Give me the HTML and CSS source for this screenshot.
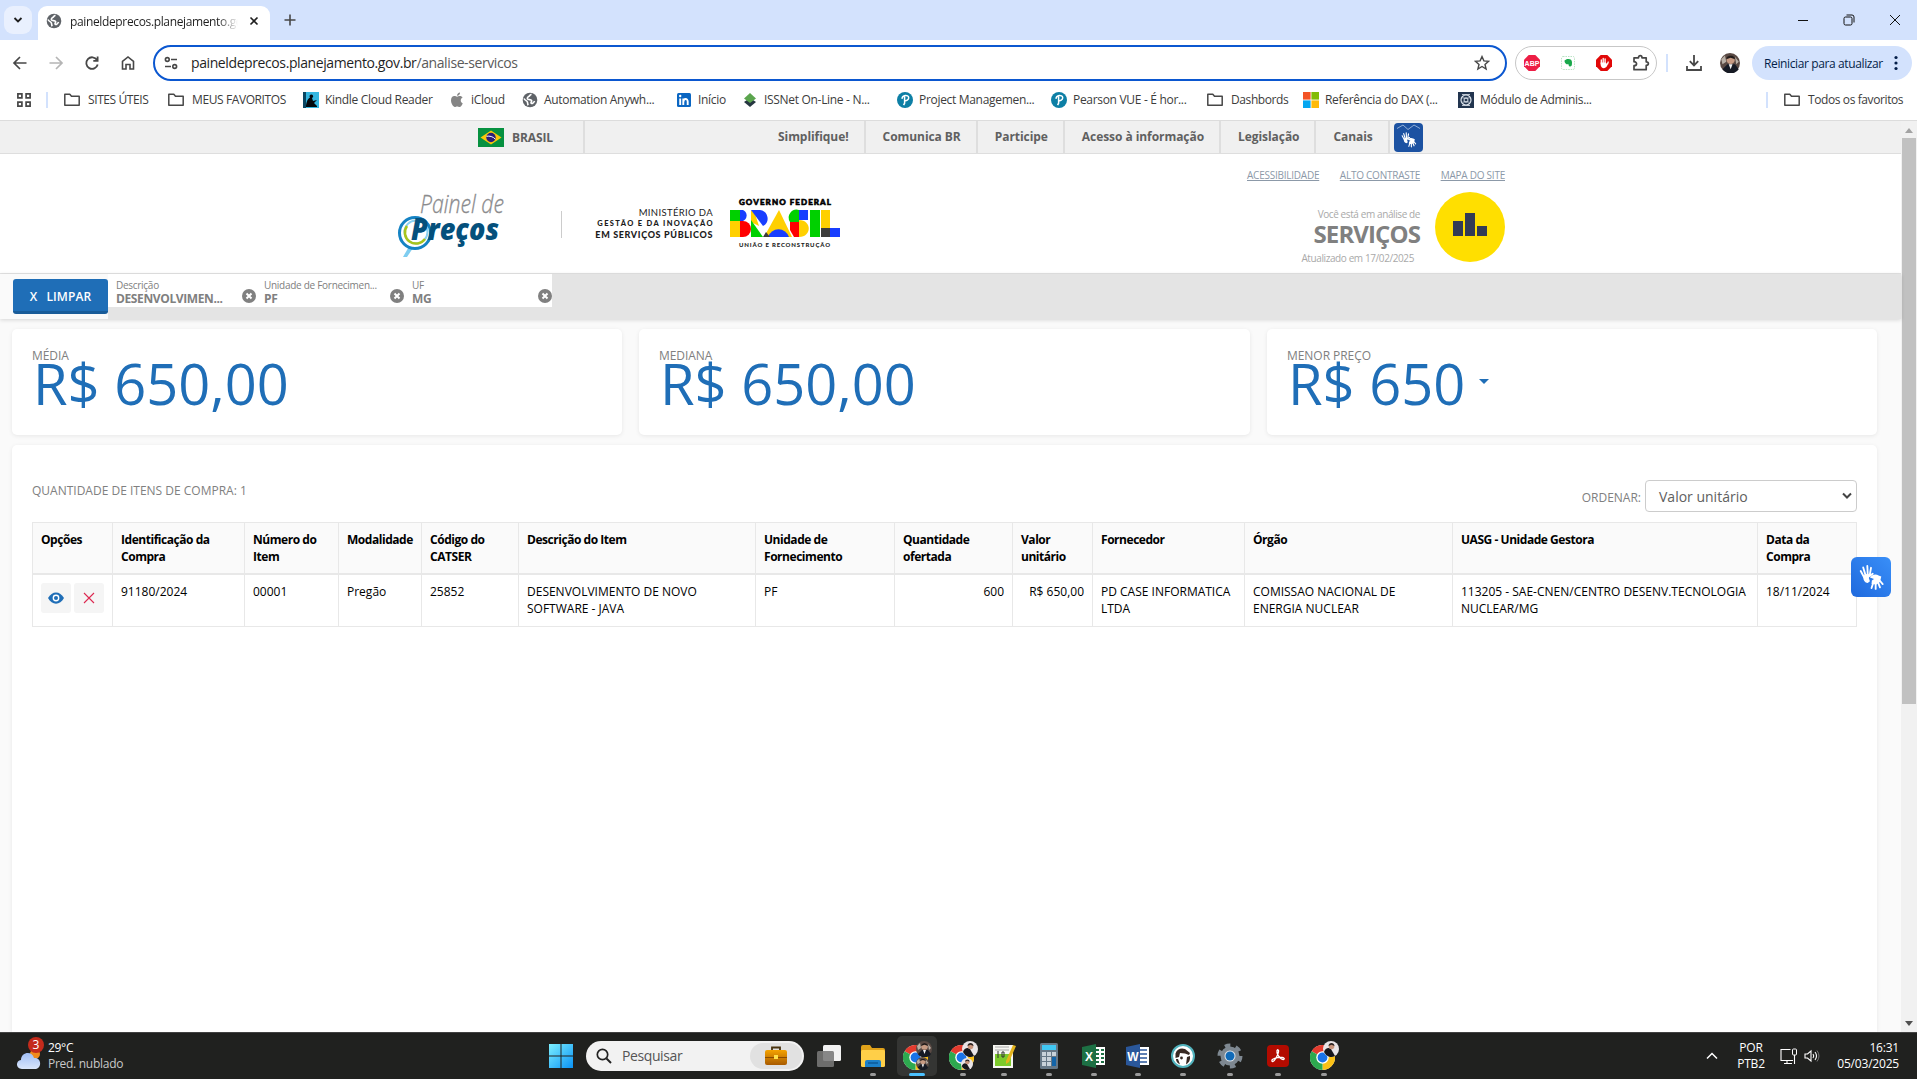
FILE: index.html
```html
<!DOCTYPE html>
<html lang="pt-BR">
<head>
<meta charset="utf-8">
<title>paineldeprecos.planejamento.gov.br</title>
<link rel="stylesheet" href="styles.css">
</head>
<body>
<svg class="defs" width="0" height="0">
  <defs>
    <linearGradient id="win" x1="0" y1="0" x2="1" y2="1"><stop offset="0" stop-color="#7df0ff"/><stop offset="1" stop-color="#0a92f5"/></linearGradient>
    <linearGradient id="case" x1="0" y1="0" x2="0" y2="1"><stop offset="0" stop-color="#f5a300"/><stop offset="1" stop-color="#a85a00"/></linearGradient>
    <linearGradient id="cloud" x1="0" y1="0" x2="0" y2="1"><stop offset="0" stop-color="#9fbdf5"/><stop offset="1" stop-color="#d9e6fb"/></linearGradient>
  </defs>
  <symbol id="folder" viewBox="0 0 16 16"><path d="M.8 13.2V2.2h5l1.7 2h7.7v9z" fill="none" stroke="#474747" stroke-width="1.5" stroke-linejoin="round"/></symbol>
  <symbol id="globe" viewBox="0 0 16 16"><circle cx="8" cy="8" r="7.3" fill="#5f6368"/><path d="M9.5 2.2c-2 .6-1.500 1.600-2.600 2.200-1 .6-2 1.400-1.300 2.600.8 1 3.200.2 4 1.400.6 1-.9 1.600-.6 2.700.3.900 2.200.6 3.600-2.100M2 6.500c.8 1.800 1.900 1.900 3 2.800 1 .8.300 2.500 1.200 3.900" fill="none" stroke="#fff" stroke-width="1.600"/></symbol>
  <symbol id="pearson" viewBox="0 0 16 16"><circle cx="8" cy="8" r="8" fill="#0d7fa5"/><path d="M5.200 6.800c-.8-3.600 6.500-4.600 6.500-1 0 2.300-2.500 3.200-4 2.700M7.600 4.600v6.600l-1 2" fill="none" stroke="#fff" stroke-width="1.500"/></symbol>
  <symbol id="hands" viewBox="0 0 24 24"><g fill="none" stroke="#fff" stroke-linecap="round" stroke-width="1.700"><path d="M5.500 12 2.500 6.500M7 10.500 4.800 3.200M9 10 8.600 1.800M10.800 10.500 12 3.500M10.800 11l2.800-2"/><path d="M14 17.500l-1.500 4.700M16.300 18v5M18.500 17l1.800 4.500M19.800 15l3 3.500"/></g><path d="M5 12c.5-2.500 4-4 6.200-1.500L10 13l1 3-2 1.500c-2.500 0-4.500-3-4-5.500z" fill="#fff"/><path d="M11 12.500c2-3 5.500-3.500 8-2l2.500 1-1.200 5-3.300 2.500-4.500-.5.300-3.300 2-1.300z" fill="#fff"/></symbol>
  <symbol id="chrome" viewBox="0 0 24 24"><circle cx="12" cy="12" r="12" fill="#fff"/><path d="M12 12 1.600 6A12 12 0 0 1 22.400 6z" fill="#e33b2e"/><path d="M12 12 22.400 6A12 12 0 0 1 12 24z" fill="#fbc116"/><path d="M12 12V24A12 12 0 0 1 1.600 6z" fill="#2da94f"/><path d="M12 6h10.400L17 15z" fill="#fbc116"/><circle cx="12" cy="12" r="6" fill="#fff"/><circle cx="12" cy="12" r="4.700" fill="#1a73e8"/></symbol>
  <symbol id="face" viewBox="0 0 16 16"><circle cx="8" cy="8" r="8" fill="#5a4a44"/><path d="M1 5 4 2l1 5-3 2zM12 3l3 4-2 2z" fill="#b9b0a6"/><path d="M2 13 6 9h6l3 4a8 8 0 0 1-13 0z" fill="#161a24"/><circle cx="8.500" cy="5.500" r="3.300" fill="#c79b83"/><path d="M5 5c0-4 7-4 7 0L8.500 3.800z" fill="#221c1b"/><path d="m7 9 1.500 4L10 9z" fill="#f3f3f3"/></symbol>
  <symbol id="face2" viewBox="0 0 16 16"><circle cx="8" cy="8" r="8" fill="#e9e4e6"/><path d="M1 11c1-4 5-5 7-3l4 7a8 8 0 0 1-11-4z" fill="#17161b"/><circle cx="8.500" cy="5.500" r="2.800" fill="#c9957c"/><path d="M5.500 5c0-4 6-4 6 0L8.500 3.800z" fill="#2c2220"/></symbol>
  <symbol id="xcircle" viewBox="0 0 14 14"><circle cx="7" cy="7" r="7" fill="#808080"/><path d="m4.500 4.500 5 5m0-5-5 5" stroke="#fff" stroke-width="2"/></symbol>
</svg>

<header class="tabstrip">
  <div class="tabsearch"><svg width="10" height="8" viewBox="0 0 10 8"><path d="m1.500 2 3.500 3.500L8.500 2" fill="none" stroke="#1f1f1f" stroke-width="1.800"/></svg></div>
  <div class="tab">
    <svg width="16" height="16"><use href="#globe"/></svg>
    <span class="tabtitle">paineldeprecos.planejamento.gov.br</span>
    <svg width="10" height="10" viewBox="0 0 10 10"><path d="m1.500 1.500 7 7m0-7-7 7" stroke="#1f1f1f" stroke-width="1.600"/></svg>
  </div>
  <svg class="newtab" width="12" height="12" viewBox="0 0 12 12"><path d="M6 .5v11M.5 6h11" stroke="#474747" stroke-width="1.600"/></svg>
  <div class="winbtns">
    <svg width="12" height="12" viewBox="0 0 12 12"><path d="M1 6.500h10" stroke="#111" stroke-width="1"/></svg>
    <svg width="12" height="12" viewBox="0 0 12 12"><rect x="1" y="3" width="8" height="8" rx="1.500" fill="none" stroke="#111"/><path d="M3.500 1H9a2 2 0 0 1 2 2v5.500" fill="none" stroke="#111"/></svg>
    <svg width="12" height="12" viewBox="0 0 12 12"><path d="m1 1 10 10M11 1 1 11" stroke="#111"/></svg>
  </div>
</header>

<div class="toolbar">
  <div class="nav">
    <svg width="16" height="16" viewBox="0 0 16 16"><path d="M14.500 8H2.500M8 2 2 8l6 6" fill="none" stroke="#474747" stroke-width="1.700"/></svg>
    <svg width="16" height="16" viewBox="0 0 16 16"><path d="M1.500 8h12M8 2l6 6-6 6" fill="none" stroke="#b5b5b5" stroke-width="1.700"/></svg>
    <svg width="16" height="16" viewBox="0 0 16 16"><path d="M13 5A5.800 5.800 0 1 0 13.700 9.500M13.600 1.500v4.300H9.300" fill="none" stroke="#474747" stroke-width="1.800"/></svg>
    <svg width="16" height="16" viewBox="0 0 16 16"><path d="M2.500 14V6.300L8 1.900l5.500 4.400V14H10V9.500H6V14z" fill="none" stroke="#474747" stroke-width="1.600"/></svg>
  </div>
  <div class="omnibox">
    <svg width="14" height="14" viewBox="0 0 14 14"><g fill="none" stroke="#474747" stroke-width="1.600"><circle cx="3.300" cy="3.500" r="1.900"/><path d="M7 3.500h6M1 10.500h6"/><circle cx="10.700" cy="10.500" r="1.900"/></g></svg>
    <span class="url">paineldeprecos.planejamento.gov.br<i>/analise-servicos</i></span>
    <svg class="star" width="16" height="16" viewBox="0 0 16 16"><path d="m8 1.600 1.900 4.300 4.700.4-3.600 3.100 1.100 4.600L8 11.500 3.900 14 5 9.400 1.400 6.300l4.700-.4z" fill="none" stroke="#474747" stroke-width="1.400"/></svg>
  </div>
  <div class="exts">
    <svg width="16" height="16" viewBox="0 0 16 16"><path d="M4.700 0h6.600L16 4.700v6.600L11.300 16H4.700L0 11.300V4.700z" fill="#ed1e45"/><text x="8" y="10.800" text-anchor="middle" class="abp">ABP</text></svg>
    <svg width="16" height="16" viewBox="0 0 16 16"><rect x="1.500" y="1.500" width="13" height="13" rx="1.500" fill="#fff" stroke="#b9e3c4" stroke-dasharray="1.500 1"/><path d="M4.500 5.500 7 4c3-.5 5 .5 5 3.500s-.5 4-2 4-1.500-1.500-1-2c-2 0-4.500-.5-4.500-4z" fill="#18a84a"/></svg>
    <svg width="16" height="16" viewBox="0 0 16 16"><path d="M4.700 0h6.600L16 4.700v6.600L11.300 16H4.700L0 11.300V4.700z" fill="#e10808"/><path d="M5.300 8.500V5M7.200 8V3.500M9.100 8V3.800M11.600 9l.6-2" stroke="#fff" stroke-width="1.300" stroke-linecap="round"/><path d="M4.600 7.500h5.200l1 1.300 1-.3c-.5 6-7 6-7.200 1z" fill="#fff"/></svg>
    <svg width="18" height="18" viewBox="0 0 18 18"><path d="M2 3.800h4.500C6.500.9 10 .9 10 3.800h4.200v4c2.900 0 2.900 3.600 0 3.600v4.300H2v-4c3.400 0 3.400-4 0-4z" fill="none" stroke="#474747" stroke-width="1.700" stroke-linejoin="round"/></svg>
  </div>
  <i class="vsep"></i>
  <svg class="dl" width="16" height="18" viewBox="0 0 16 18"><path d="M8 1v10M3.800 7.200 8 11.400l4.200-4.200M1 12v4h14v-4" fill="none" stroke="#474747" stroke-width="1.800"/></svg>
  <svg class="avatar" width="20" height="20"><use href="#face"/></svg>
  <div class="update"><span>Reiniciar para atualizar</span><svg width="4" height="16" viewBox="0 0 4 16"><g fill="#041e49"><circle cx="2" cy="2.500" r="1.600"/><circle cx="2" cy="8" r="1.600"/><circle cx="2" cy="13.500" r="1.600"/></g></svg></div>
</div>

<nav class="bookmarks">
  <svg width="16" height="16" viewBox="0 0 16 16"><g fill="none" stroke="#474747" stroke-width="1.700"><path d="M1.900 1.900h4v4h-4zM10.100 1.900h4v4h-4zM1.900 10.100h4v4h-4zM10.100 10.100h4v4h-4z"/></g></svg>
  <i class="vsep"></i>
  <a class="bm fold"><svg width="16" height="16"><use href="#folder"/></svg><span>SITES ÚTEIS</span></a>
  <a class="bm fold"><svg width="16" height="16"><use href="#folder"/></svg><span>MEUS FAVORITOS</span></a>
  <a class="bm"><svg width="16" height="16" viewBox="0 0 16 16"><rect width="16" height="16" fill="#35b6e0"/><path d="M0 0h3v16H0z" fill="#0a4662"/><path d="M7 5.500a1.800 1.800 0 1 1 2 .5l1 3 4-1-3 3 3 3v1H3c0-3 1-8 4-9.500z" fill="#04080c"/></svg><span>Kindle Cloud Reader</span></a>
  <a class="bm"><svg width="16" height="16" viewBox="0 0 16 16"><path d="M10.800 4c-1.200 0-1.900.7-2.700.7S6.500 4 5.300 4C3.600 4 2 5.500 2 8.300 2 11.500 4.200 15 5.800 15c1 0 1.300-.6 2.400-.6s1.400.6 2.300.6c1.400 0 2.800-2.400 3.200-3.800-2.700-1.200-2.400-4.600-.1-5.700C12.900 4.500 12 4 10.800 4zM8 3.800C8 2 9.500.6 11 .5 11.200 2.300 9.700 3.900 8 3.800z" fill="#858585"/></svg><span>iCloud</span></a>
  <a class="bm"><svg width="16" height="16"><use href="#globe"/></svg><span>Automation Anywh...</span></a>
  <a class="bm"><svg width="16" height="16" viewBox="0 0 16 16"><rect x="1" y="1" width="14" height="14" rx="1.500" fill="#0a66c2"/><path d="M4.200 6.500V13M7.300 13V6.500M7.400 10c0-4 4.300-4 4.300-.5V13" stroke="#fff" stroke-width="1.900" fill="none"/><circle cx="4.200" cy="4" r="1.200" fill="#fff"/></svg><span>Início</span></a>
  <a class="bm"><svg width="16" height="16" viewBox="0 0 16 16"><path d="m2 10 6-4 6 4-6 5z" fill="#263640"/><path d="m2 6.500 6-5.500 6 5.500-6 4.500z" fill="#5ba54e"/></svg><span>ISSNet On-Line - N...</span></a>
  <a class="bm"><svg width="16" height="16"><use href="#pearson"/></svg><span>Project Managemen...</span></a>
  <a class="bm"><svg width="16" height="16"><use href="#pearson"/></svg><span>Pearson VUE - É hor...</span></a>
  <a class="bm fold"><svg width="16" height="16"><use href="#folder"/></svg><span>Dashbords</span></a>
  <a class="bm"><svg width="16" height="16" viewBox="0 0 16 16"><path d="M0 0h7.600v7.600H0z" fill="#f35325"/><path d="M8.400 0H16v7.600H8.400z" fill="#81bc06"/><path d="M0 8.400h7.600V16H0z" fill="#05a6f0"/><path d="M8.400 8.400H16V16H8.400z" fill="#ffba08"/></svg><span>Referência do DAX (...</span></a>
  <a class="bm"><svg width="16" height="16" viewBox="0 0 16 16"><path d="M0 0h16v16H0z" fill="#22354f"/><circle cx="8" cy="8" r="5" fill="none" stroke="#dfe6ee" stroke-width="1.200"/><circle cx="8" cy="8" r="2" fill="none" stroke="#dfe6ee"/><path d="M4 2.500h8M4 13.500h8M4.500 6h7M4.500 10h7" stroke="#dfe6ee" stroke-width=".8"/></svg><span>Módulo de Adminis...</span></a>
  <i class="vsep"></i>
  <a class="bm fold"><svg width="16" height="16"><use href="#folder"/></svg><span>Todos os favoritos</span></a>
</nav>

<div class="viewport">
  <main class="page">
    <div class="govbar">
      <div class="brasil"><svg width="26" height="19" viewBox="0 0 26 19"><path d="M0 0h26v19H0z" fill="#069140"/><path d="m2.500 9.500 10.500-7 10.500 7-10.500 7z" fill="#f9c70a"/><circle cx="13" cy="9.500" r="4.700" fill="#2a1d79"/><path d="M8.500 8.300c3-.6 6.500.2 8.800 2.800" stroke="#fff" fill="none"/></svg><span>BRASIL</span></div>
      <a>Simplifique!</a><a>Comunica BR</a><a>Participe</a><a>Acesso à informação</a><a>Legislação</a><a>Canais</a>
      <svg class="libras" width="29" height="29" viewBox="0 0 29 29"><rect width="29" height="29" rx="4" fill="#1c52a2"/><path d="M3 5.500 9 2l5 4.500L20 2l6 3.500" fill="none" stroke="#9cb8de" stroke-width=".9"/><use href="#hands" x="6.500" y="8" width="16" height="17"/></svg>
    </div>

    <div class="sitehead">
      <svg class="painel" width="106" height="66" viewBox="0 0 106 66">
        <path d="m5 66 8-14 4 2-8 12z" fill="#7fcdf0"/>
        <circle cx="17" cy="42" r="15.500" fill="#fff" stroke="#1583c4" stroke-width="3"/>
        <circle cx="18" cy="41" r="11.500" fill="none" stroke="#8ad1f1" stroke-width="2"/>
        <path d="M9 35a11 11 0 0 0 18 13" fill="none" stroke="#a8c41c" stroke-width="2.500"/>
        <text x="22" y="21.500" class="lg1" textLength="84" lengthAdjust="spacingAndGlyphs">Painel de</text>
        <text x="13" y="48.500" class="lg2" textLength="88" lengthAdjust="spacingAndGlyphs">Preços</text>
      </svg>
      <i class="hdiv"></i>
      <div class="ministry"><span class="m1">MINISTÉRIO DA</span><span class="m2">GESTÃO E DA INOVAÇÃO</span><span class="m3">EM SERVIÇOS PÚBLICOS</span></div>
      <svg class="govfed" width="110" height="56" viewBox="0 0 110 56">
        <text x="9" y="10" class="gf1" textLength="92">GOVERNO FEDERAL</text>
        <g transform="translate(0 15)">
          <path d="M0 0h10v11H0z" fill="#00d000"/><path d="M10 0h3a6 6 0 0 1 0 11h-3z" fill="#183eff"/><path d="M0 11h10v16H0z" fill="#ffd000"/><path d="M10 11h3a8 8 0 0 1 0 16h-3z" fill="#f00"/>
          <path d="M21 0v12l8 4L25 4z" fill="#ffd000"/><path d="M21 0h9a8.500 8.500 0 0 1 3 16z" fill="#183eff"/><path d="M21 10v17h12z" fill="#00d000"/>
          <path d="m49 0 13 27H34z" fill="#ffd000"/><path d="M38 27a11 11 0 0 1 21 0z" fill="#183eff"/><path d="m33 27 3-5 4 5z" fill="#3c3c3b"/>
          <path d="M69 0v12h-9a8 8 0 0 1 9-12z" fill="#00d000"/><path d="M69 0h9v10h-9z" fill="#183eff"/><path d="M60 12h9v15h-5l-4-7z" fill="#f00"/><path d="M69 10c13 0 13 17 0 17z" fill="#ffd000"/>
          <path d="M80 0h10v27H80z" fill="#00d000"/><path d="M91 0h9v18h-9z" fill="#ffd000"/><path d="M91 18h9v9h-9z" fill="#3c3c3b"/><path d="M100 18h10v9h-10z" fill="#183eff"/>
        </g>
        <text x="9" y="52" class="gf2" textLength="91">UNIÃO E RECONSTRUÇÃO</text>
      </svg>
      <div class="context">
        <div class="links"><a>ACESSIBILIDADE</a><a>ALTO CONTRASTE</a><a>MAPA DO SITE</a></div>
        <div class="ctxrow">
          <div class="ctxtext"><small>Você está em análise de</small><strong>SERVIÇOS</strong><small class="upd">Atualizado em 17/02/2025</small></div>
          <svg width="70" height="70" viewBox="0 0 70 70"><circle cx="35" cy="35" r="35" fill="#ffdf00"/><path d="M18 29h10v15H18zM30 21h10v23H30zM42 34h10v10H42z" fill="#323b55"/></svg>
        </div>
      </div>
    </div>

    <div class="filterbar">
      <div class="clearwrap"><button class="clear"><b>X</b>LIMPAR</button></div>
      <div class="chip"><div><small>Descrição</small><b>DESENVOLVIMEN...</b></div><svg width="14" height="14"><use href="#xcircle"/></svg></div>
      <div class="chip"><div><small>Unidade de Fornecimen...</small><b>PF</b></div><svg width="14" height="14"><use href="#xcircle"/></svg></div>
      <div class="chip"><div><small>UF</small><b>MG</b></div><svg width="14" height="14"><use href="#xcircle"/></svg></div>
    </div>

    <div class="cards">
      <section class="card"><h3>MÉDIA</h3><p>R$ 650,00</p></section>
      <section class="card"><h3>MEDIANA</h3><p>R$ 650,00</p></section>
      <section class="card"><h3>MENOR PREÇO</h3><p>R$ 650<i class="caret"></i></p></section>
    </div>

    <section class="panel">
      <div class="panelhead"><span class="qty">QUANTIDADE DE ITENS DE COMPRA: 1</span><label>ORDENAR:</label><div class="select"><span>Valor unitário</span><svg width="10" height="8" viewBox="0 0 10 8"><path d="m1 1.500 4 4 4-4" fill="none" stroke="#444" stroke-width="2"/></svg></div></div>
      <table>
        <colgroup><col class="c1"><col class="c2"><col class="c3"><col class="c4"><col class="c5"><col class="c6"><col class="c7"><col class="c8"><col class="c9"><col class="c10"><col class="c11"><col class="c12"><col class="c13"></colgroup>
        <thead><tr><th>Opções</th><th>Identificação da<br>Compra</th><th>Número do<br>Item</th><th>Modalidade</th><th>Código do<br>CATSER</th><th>Descrição do Item</th><th>Unidade de<br>Fornecimento</th><th>Quantidade<br>ofertada</th><th>Valor<br>unitário</th><th>Fornecedor</th><th>Órgão</th><th>UASG - Unidade Gestora</th><th>Data da<br>Compra</th></tr></thead>
        <tbody><tr>
          <td class="opts"><div><span><svg width="16" height="12" viewBox="0 0 16 12"><path d="M0 6c4-7.500 12-7.500 16 0-4 7.500-12 7.500-16 0z" fill="#1f6eb7"/><circle cx="8" cy="6" r="3.400" fill="#fff"/><circle cx="8" cy="6" r="2" fill="#1f6eb7"/></svg></span><span><svg width="12" height="12" viewBox="0 0 12 12"><path d="m1 1 10 10M11 1 1 11" stroke="#dc2850" stroke-width="1.100"/></svg></span></div></td>
          <td>91180/2024</td><td>00001</td><td>Pregão</td><td>25852</td><td>DESENVOLVIMENTO DE NOVO<br>SOFTWARE - JAVA</td><td>PF</td><td class="num">600</td><td class="num">R$ 650,00</td><td>PD CASE INFORMATICA<br>LTDA</td><td>COMISSAO NACIONAL DE<br>ENERGIA NUCLEAR</td><td>113205 - SAE-CNEN/CENTRO DESENV.TECNOLOGIA<br>NUCLEAR/MG</td><td>18/11/2024</td></tr></tbody>
      </table>
    </section>
    <div class="vlibras"><svg width="26" height="26"><use href="#hands"/></svg></div>
  </main>
  <div class="scrollbar"><svg width="8" height="5" viewBox="0 0 8 5"><path d="M0 5h8L4 0z" fill="#a3a3a3"/></svg><i class="thumb"></i><svg width="8" height="5" viewBox="0 0 8 5"><path d="M0 0h8L4 5z" fill="#505050"/></svg></div>
</div>

<footer class="taskbar">
  <div class="weather"><svg width="28" height="36" viewBox="0 0 28 36"><circle cx="19" cy="19" r="5" fill="#f08a1c"/><path d="M6 34c-6 0-7-8-1-9 0-8 11-10 13-2 8-1 8 11 1 11z" fill="url(#cloud)"/><circle cx="20" cy="10" r="8" fill="#c42b1c"/><text x="20" y="14" text-anchor="middle" class="badge">3</text></svg><div><b>29°C</b><span>Pred. nublado</span></div></div>
  <div class="apps">
    <div class="app"><svg width="24" height="24" viewBox="0 0 24 24"><path d="M0 0h11.500v11.500H0zM12.500 0H24v11.500H12.500zM0 12.500h11.500V24H0zM12.500 12.500H24V24H12.500z" fill="url(#win)"/></svg></div>
    <div class="search"><svg width="16" height="16" viewBox="0 0 16 16"><circle cx="6.500" cy="6.500" r="5.200" fill="none" stroke="#222" stroke-width="1.700"/><path d="m10.500 10.500 4.500 4.500" stroke="#222" stroke-width="1.900"/></svg><span>Pesquisar</span><div class="pill"><svg width="24" height="20" viewBox="0 0 24 20"><path d="M8 4V1.500h8V4" fill="none" stroke="#4a3410" stroke-width="1.800"/><rect x="1" y="4" width="22" height="15" rx="2" fill="url(#case)"/><path d="M1 11.500h22" stroke="#8b4b00"/><rect x="10" y="9" width="4" height="4" fill="#ffe14a"/></svg></div></div>
    <div class="app"><svg width="24" height="24" viewBox="0 0 24 24"><rect x="6" y="1" width="18" height="16" rx="1.500" fill="#f2f2f2"/><rect y="7" width="17" height="16" rx="1.500" fill="#777" opacity=".88"/></svg></div>
    <div class="app run"><svg width="26" height="24" viewBox="0 0 26 24"><path d="M1 3q0-2 2-2h7l2 3h11q2 0 2 2v4H1z" fill="#e0a21a"/><rect x="1" y="6" width="24" height="17" rx="1.500" fill="#ffcf48"/><path d="M5 23v-5q0-2 2-2h12q2 0 2 2v5z" fill="#1c80c9"/><path d="M8 19h10" stroke="#0c5a97" stroke-width="1.500"/></svg></div>
    <div class="app run active"><svg width="32" height="30" viewBox="0 0 32 30"><use href="#chrome" x="2" y="4" width="25" height="25"/><use href="#face" x="15" y="0" width="16" height="16"/><use href="#face" x="15" y="16" width="13" height="13"/></svg></div>
    <div class="app run"><svg width="32" height="30" viewBox="0 0 32 30"><use href="#chrome" x="2" y="4" width="25" height="25"/><use href="#face2" x="15" y="0" width="16" height="16"/><use href="#face2" x="14" y="17" width="12" height="12"/></svg></div>
    <div class="app run"><svg width="24" height="26" viewBox="0 0 24 26"><rect x="1" y="2" width="20" height="23" fill="#f7f7f2"/><path d="M3 11h16v12H3z" fill="#7dca2b"/><path d="M3 4h14M3 7h14" stroke="#a8a8a8"/><path d="M6 8v7M10 9h2v5h-2z" stroke="#333" fill="none"/><path d="m14 18 7-16 3 1-7 16-3 2z" fill="#e5b41d"/></svg></div>
    <div class="app run"><svg width="18" height="26" viewBox="0 0 18 26"><rect width="18" height="26" rx="1.500" fill="#657786"/><path d="M2 2h14v5H2z" fill="#40c8f4"/><path d="M2 9h4v4H2zM7 9h4v4H7zM12 9h4v4h-4zM2 14h4v4H2zM7 14h4v4H7zM2 19h4v4H2zM7 19h4v4H7z" fill="#c8d2da"/><path d="M12 14h4v9h-4z" fill="#1264a8"/></svg></div>
    <div class="app run"><svg width="24" height="24" viewBox="0 0 24 24"><path d="M11 3h12v18H11z" fill="#fff"/><path d="M14 6h3M19 6h3M14 10h3M19 10h3M14 14h3M19 14h3M14 18h3M19 18h3" stroke="#1d7044" stroke-width="2"/><path d="m0 3 14-3v24L0 21z" fill="#1d7044"/><text x="7" y="16.500" text-anchor="middle" class="ltr">X</text></svg></div>
    <div class="app run"><svg width="24" height="24" viewBox="0 0 24 24"><path d="M11 3h12v18H11z" fill="#fff"/><path d="M14 6h7M14 10h7M14 14h7M14 18h7" stroke="#2a579a" stroke-width="1.500"/><path d="m0 3 14-3v24L0 21z" fill="#2a579a"/><text x="7" y="16.500" text-anchor="middle" class="ltr">W</text></svg></div>
    <div class="app run"><svg width="24" height="24" viewBox="0 0 24 24"><circle cx="12" cy="12" r="11" fill="#fff" stroke="#51b3bd" stroke-width="2"/><path d="M4.500 9.500C6 5 10 3.500 14 5l5 4-1 2-4-1.500L9 9l-1 4-3.500 1z" fill="#382923"/><path d="m16 13 3-1c.5 4-1 7-4 8.500zM7 15l2 5.500C6 19 5 17 5 15z" fill="#382923"/><circle cx="10.500" cy="14" r="1.400" fill="#382923"/></svg></div>
    <div class="app run"><svg width="26" height="26" viewBox="0 0 26 26"><circle cx="13" cy="13" r="10.500" fill="none" stroke="#7e8891" stroke-width="4" stroke-dasharray="5.500 5.500"/><circle cx="13" cy="13" r="7.500" fill="#dfe5ea" stroke="#7e8891" stroke-width="4"/><circle cx="13" cy="13" r="4.500" fill="#116bb8"/></svg></div>
    <div class="app run"><svg width="22" height="22" viewBox="0 0 22 22"><rect width="22" height="22" rx="4" fill="#b30b00"/><path d="M5 16c-1-2 5-4 10-3.500 4 .5 2 3-.5 1.500-3-2-5-6-4.500-8.500.5-1.500 2-.5 1.500 1.500C11 10 8 15.500 6 16.500c-.5.300-1 0-1-.5z" fill="none" stroke="#fff" stroke-width="1.300"/></svg></div>
    <div class="app run"><svg width="32" height="30" viewBox="0 0 32 30"><use href="#chrome" x="2" y="4" width="25" height="25"/><use href="#face2" x="15" y="0" width="16" height="16"/></svg></div>
  </div>
  <div class="tray">
    <svg width="12" height="8" viewBox="0 0 12 8"><path d="m1 6.500 5-5 5 5" fill="none" stroke="#fff" stroke-width="1.500"/></svg>
    <div class="lang"><span>POR</span><span>PTB2</span></div>
    <svg width="17" height="17" viewBox="0 0 17 17"><path d="M10.500 1.500H1v11h12M4 15.500h8M7 12.500v3M14.500 7v9" fill="none" stroke="#fff" stroke-width="1.100"/><rect x="12.500" y="1" width="4" height="6" rx="1" fill="none" stroke="#fff"/></svg>
    <svg width="16" height="14" viewBox="0 0 16 14"><path d="M1 5v4h2.500L7 12V2L3.500 5zM9 5q1.500 2 0 4M11 3q3 4 0 8" fill="none" stroke="#fff" stroke-width="1.100"/><path d="M13 1.500q4 5.500 0 11" fill="none" stroke="#777"/></svg>
    <div class="clock"><span>16:31</span><span>05/03/2025</span></div>
  </div>
</footer>
</body>
</html>
```
FILE: styles.css
```css
* { box-sizing: border-box; }
body { margin: 0; width: 1917px; height: 1079px; overflow: hidden; display: flex; flex-direction: column; font-family: "Open Sans", "Noto Sans", sans-serif; font-size: 12px; background: #fff; }
svg { display: block; flex: none; }
.defs { position: absolute; }

/* browser chrome */
.tabstrip { height: 40px; flex: none; background: #d3e2fd; display: flex; align-items: center; padding: 0 16px 0 4px; }
.tabsearch { width: 28px; height: 28px; border-radius: 9px; background: #e9f0fe; display: flex; align-items: center; justify-content: center; }
.tab { width: 232px; height: 34px; margin: 6px 0 0 6px; padding: 0 11px 5px 8px; background: #fff; border-radius: 9px 9px 0 0; display: flex; align-items: center; }
.tabtitle { width: 168px; margin: 2px 11px 0 8px; overflow: hidden; white-space: nowrap; letter-spacing: -.36px; color: #1f1f1f; -webkit-mask-image: linear-gradient(90deg, #000 88%, transparent); }
.newtab { margin-left: 14px; }
.winbtns { margin-left: auto; display: flex; gap: 34px; }
.toolbar { height: 44px; flex: none; display: flex; align-items: center; padding: 2px 5px 0 12px; border-radius: 8px 8px 0 0; }
.nav { display: flex; gap: 20px; width: 141px; }
.omnibox { width: 1354px; height: 36px; border: 2px solid #0b57d0; border-radius: 18px; display: flex; align-items: center; padding: 0 15px 0 9px; }
.url { margin: -1px 0 0 13px; font-size: 14px; letter-spacing: -.4px; color: #1f1f1f; }
.url i { font-style: normal; color: #5a5a5a; }
.star { margin-left: auto; }
.exts { width: 142px; height: 34px; margin-left: 8px; border: 1px solid #c7c7c7; border-radius: 17px; display: flex; align-items: center; gap: 20px; padding-left: 8px; }
.abp { font: bold 7px "Liberation Sans", sans-serif; fill: #fff; }
.vsep { width: 2px; height: 16px; background: #d3e2fd; }
.toolbar .vsep { margin-left: 9px; height: 18px; }
.dl { margin-left: 18px; }
.avatar { margin-left: 18px; }
.update { margin-left: 12px; width: 160px; height: 34px; border-radius: 17px; background: #d3e2fd; color: #041e49; display: flex; align-items: center; padding: 0 14px 0 12px; letter-spacing: -.38px; justify-content: space-between; white-space: nowrap; }
.bookmarks { height: 37px; flex: none; border-bottom: 1px solid #dcdcdc; display: grid; align-items: center; grid-template-columns: 30px 18px 104px 135px 146px 73px 154px 66px 155px 154px 156px 96px 155px 308px 18px 133px; padding: 0 0 4px 16px; color: #3c3c3c; }
.bm { display: flex; align-items: center; gap: 6px; white-space: nowrap; letter-spacing: -.31px; }
.bm span { margin-top: -1px; }
.fold { gap: 8px; letter-spacing: -.4px; }

/* page */
.viewport { flex: 1; min-height: 0; display: flex; }
.page { width: 1901px; background: #fafafa; display: flex; flex-direction: column; position: relative; }
.scrollbar { width: 16px; background: #f1f1f1; display: flex; flex-direction: column; align-items: center; padding: 7px 0 6px; }
.scrollbar svg:last-child { margin-top: auto; }
.thumb { width: 14px; height: 566px; margin-top: 5px; background: #c1c1c1; }
.govbar { height: 33px; flex: none; background: #f0f0f0; border-bottom: 1px solid #dedede; display: flex; padding-left: 478px; color: #606060; font-weight: 700; }
.brasil { width: 107px; border-right: 2px solid #dedede; display: flex; align-items: center; gap: 8px; margin-right: 176px; letter-spacing: -.1px; }
.govbar a { padding: 7px 15px 0 17px; border-right: 2px solid #dedede; line-height: 17px; white-space: nowrap; letter-spacing: -.06px; }
.libras { margin: 2px 0 0 4px; }
.sitehead { height: 120px; flex: none; background: #fff; border-bottom: 1px solid #e4e4e4; display: flex; padding-left: 398px; }
.painel { margin-top: 37px; overflow: visible; }
.lg1 { font: italic 300 25px "Open Sans", sans-serif; fill: #8b8b8d; stroke: #8b8b8d; stroke-width: .3; }
.lg2 { font: italic 800 30px "Open Sans", sans-serif; fill: #04507c; }
.hdiv { width: 1px; height: 27px; margin: 57px 0 0 57px; background: #ccc; }
.ministry { width: 151px; margin-top: 53px; display: flex; flex-direction: column; align-items: flex-end; font-family: Lato, sans-serif; color: #1c1c1c; white-space: nowrap; line-height: 11px; }
.m1 { font-size: 9.5px; letter-spacing: .35px; }
.m2 { font-size: 7.5px; font-weight: 900; letter-spacing: 1.37px; margin-right: -1px; }
.m3 { font-size: 9px; font-weight: 900; letter-spacing: .65px; }
.govfed { margin: 41px 0 0 17px; }
.gf1 { font: 900 8px Lato, sans-serif; stroke: #000; stroke-width: .6; }
.gf2 { font: 900 6px Lato, sans-serif; fill: #222; }
.context { width: 265px; margin-left: 400px; padding-top: 14px; }
.links { display: flex; justify-content: space-between; padding-left: 7px; font-size: 10px; line-height: 14px; color: #8c99a8; letter-spacing: -.24px; white-space: nowrap; }
.links a { text-decoration: underline; }
.ctxrow { display: flex; justify-content: flex-end; gap: 15px; margin-top: 10px; }
.ctxtext { display: flex; flex-direction: column; align-items: flex-end; padding-top: 15px; color: #a9a9a9; }
.ctxtext small { font-size: 10px; line-height: 14px; letter-spacing: -.4px; }
.ctxtext strong { font-size: 24px; line-height: 26px; letter-spacing: -.9px; color: #808080; }
.ctxtext .upd { margin: 4px 6px 0 0; letter-spacing: -.4px; }
.filterbar { height: 45px; flex: none; background: #e4e4e4; display: flex; align-items: flex-start; box-shadow: 0 1px 4px rgba(0,0,0,.15); z-index: 1; }
.clearwrap { width: 108px; height: 45px; background: #fafafa; padding: 5px 0 0 13px; }
.clear { width: 95px; height: 35px; border: 0; border-bottom: 3px solid #195c99; border-radius: 3px; background: #1f6eb7; color: #fff; font: 600 12px "Open Sans", sans-serif; padding: 3px 0 0; letter-spacing: .1px; }
.clear b { margin-right: 9px; font-weight: 600; }
.chip { width: 148px; height: 33px; background: #fff; display: flex; justify-content: space-between; padding: 5px 0 0 8px; color: #808080; }
.chip small { display: block; font-size: 10px; line-height: 13px; letter-spacing: -.28px; }
.chip b { display: block; line-height: 13px; letter-spacing: -.38px; }
.chip div { white-space: nowrap; }
.chip svg { margin: 10px 0 0 -20px; }
.cards { display: grid; grid-template-columns: 610px 611px 610px; gap: 17px; padding: 10px 0 0 12px; }
.card, .panel { background: #fff; border-radius: 5px; box-shadow: 0 1px 4px rgba(0,0,0,.08); }
.card { height: 106px; padding: 18px 20px 0; color: #808080; }
.card h3 { margin: 0; font-size: 12px; font-weight: 400; line-height: 17px; letter-spacing: -.05px; }
.card p { margin: -11px 0 0 1px; font-size: 56px; line-height: 60px; color: #1f6eb7; display: flex; align-items: center; }
.caret { width: 0; height: 0; margin: -3px 0 0 14px; border: 5px solid transparent; border-top-color: #1f6eb7; border-bottom: 0; }
.panel { width: 1865px; flex: 1; margin: 10px 0 0 12px; padding: 35px 20px 0; border-radius: 5px 5px 0 0; }
.panelhead { display: flex; height: 42px; color: #808080; }
.qty { margin-right: auto; line-height: 21px; }
.panelhead label { line-height: 35px; margin-right: 4px; }
.select { width: 212px; height: 32px; border: 1px solid #ccc; border-radius: 4px; display: flex; align-items: center; justify-content: space-between; padding: 0 4px 0 13px; color: #606060; font-size: 14px; }
table { width: 1825px; table-layout: fixed; border-collapse: collapse; color: #000; line-height: 17px; }
th, td { border: 1px solid #e8e8e8; padding: 8px 0 9px 8px; vertical-align: top; text-align: left; white-space: nowrap; }
th { background: #fafafa; border-bottom-width: 2px; padding-bottom: 8px; letter-spacing: -.46px; }
td { letter-spacing: 0; }
td.num { text-align: right; padding-right: 8px; }
td.opts { padding: 8px 0 0 8px; }
.opts div { display: flex; gap: 3px; }
.opts span { width: 30px; height: 30px; border-radius: 3px; background: #f5f5f5; display: flex; align-items: center; justify-content: center; }
.c1 { width: 80px; } .c2 { width: 132px; } .c3 { width: 94px; } .c4 { width: 83px; } .c5 { width: 97px; } .c6 { width: 237px; } .c7 { width: 139px; } .c8 { width: 118px; } .c9 { width: 80px; } .c10 { width: 152px; } .c11 { width: 208px; } .c12 { width: 305px; } .c13 { width: 99px; }
.vlibras { position: absolute; right: 10px; top: 436px; width: 40px; height: 40px; border-radius: 6px; background: linear-gradient(45deg, #1f69dd, #398ff8); display: flex; align-items: center; justify-content: center; }

/* taskbar */
.taskbar { height: 47px; flex: none; background: #20211f; border-top: 1px solid #444; color: #fff; display: flex; align-items: center; }
.weather { width: 538px; padding-left: 16px; display: flex; gap: 4px; align-items: center; line-height: 16px; }
.weather b { display: block; font-weight: 400; letter-spacing: -.3px; }
.weather span { color: #c9c9c9; letter-spacing: -.28px; }
.badge { font: 12px "Open Sans", sans-serif; fill: #fff; }
.weather svg { margin-top: -6px; }
.apps { display: grid; grid-template-columns: 45px 224px 44px 44px 44px 48px 34px 56px 34px 54px 36px 58px 38px 54px; align-items: center; height: 46px; }
.app { height: 40px; display: flex; align-items: center; justify-content: center; position: relative; }
.run::after { content: ""; position: absolute; bottom: 0; left: 50%; width: 6px; height: 3px; margin-left: -3px; border-radius: 2px; background: #9a9a9a; }
.active { width: 40px; background: #343533; border-radius: 5px; justify-self: center; }
.active::after { width: 16px; margin-left: -8px; background: #4cc2ff; }
.search { width: 218px; height: 30px; margin-left: 3px; border-radius: 15px; background: #f2f2f2; color: #555; font-size: 14px; letter-spacing: -.4px; display: flex; align-items: center; gap: 10px; padding: 0 2px 0 10px; }
.search span { margin-top: -2px; }
.pill { width: 52px; height: 26px; margin-left: auto; border-radius: 13px; background: #e1e1e1; display: flex; align-items: center; justify-content: center; }
.ltr { font: bold 12px "Liberation Sans", sans-serif; fill: #fff; }
.tray { margin-left: auto; padding-right: 18px; display: flex; align-items: center; line-height: 16px; letter-spacing: -.2px; }
.tray span { display: block; }
.lang { width: 30px; margin: 0 14px 0 18px; text-align: center; }
.tray svg + svg { margin-left: 7px; }
.clock { width: 79px; text-align: right; }
```
